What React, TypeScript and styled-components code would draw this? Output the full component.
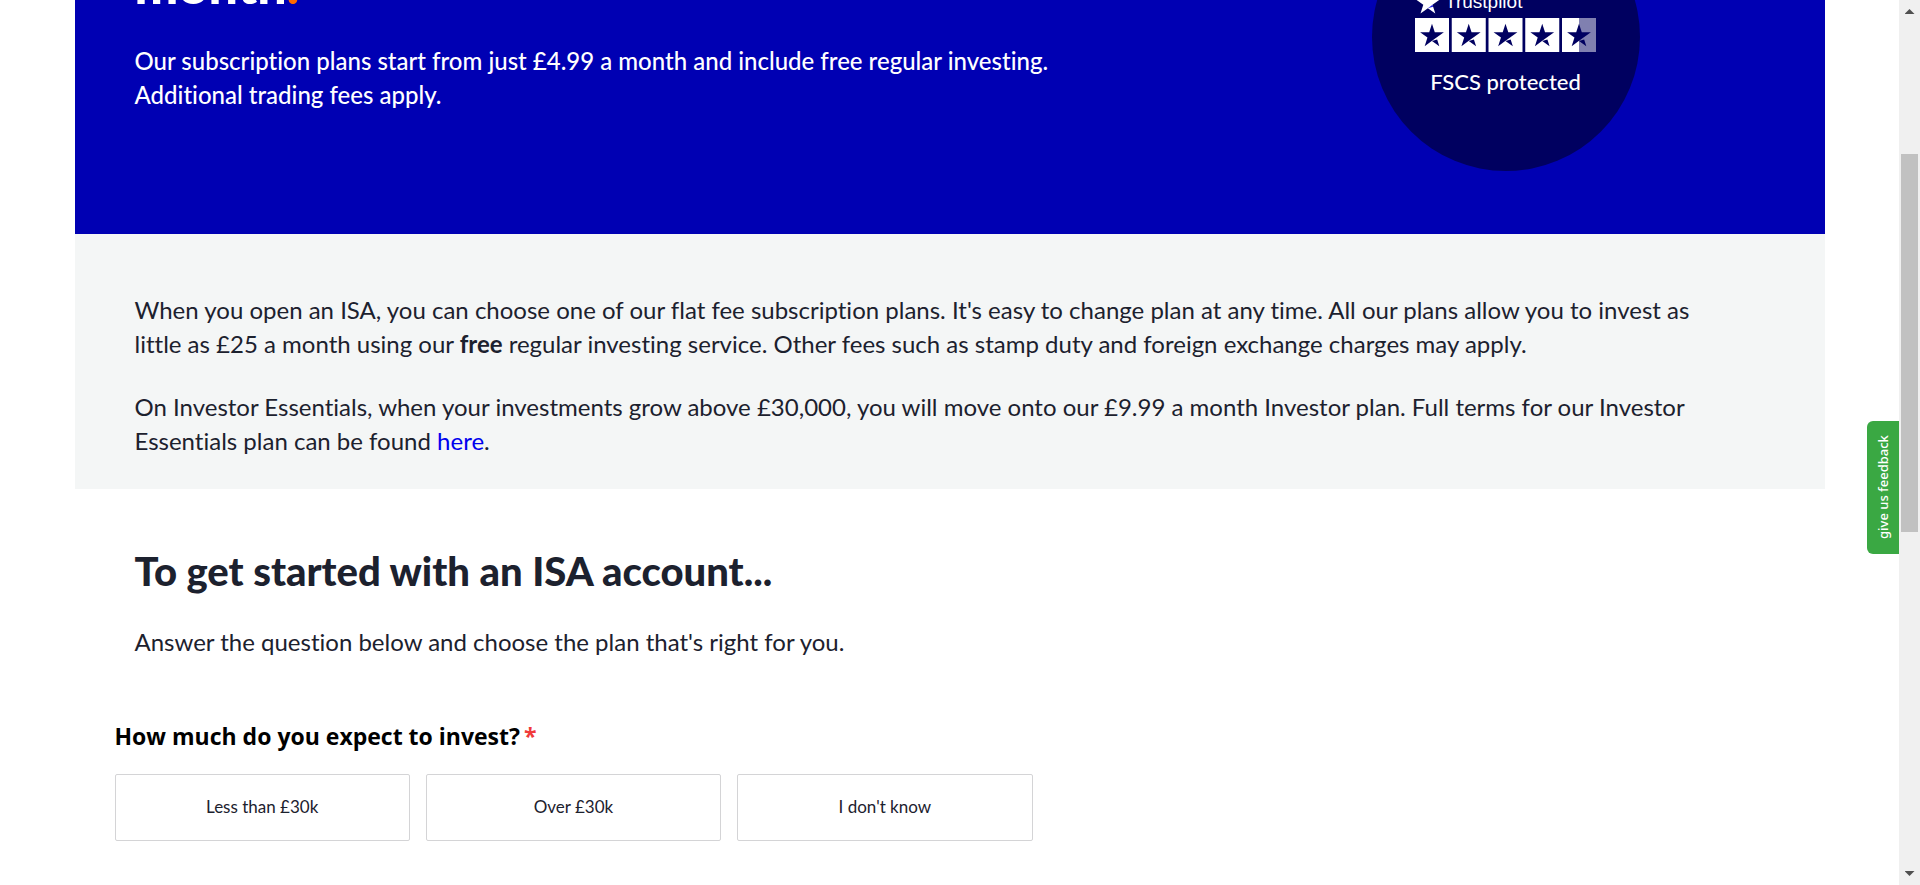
import React, { useState } from "react";
import styled, { createGlobalStyle, css } from "styled-components";

const colors = {
  blue: "#0000b3",
  navy: "#000060",
  ink: "#1c212e",
  mist: "#f4f6f6",
  orange: "#ff6a00",
  green: "#3aa843",
  line: "#d4d4d6",
};

const GlobalStyle = createGlobalStyle`
  *, *::before, *::after { box-sizing: border-box; }
  body {
    margin: 0;
    background: #fff;
    color: ${colors.ink};
    font-family: Lato, "Liberation Sans", sans-serif;
    font-variant-ligatures: none;
  }
  h1, h2, h3, p { margin: 0; }
`;

const Shell = styled.div`
  display: flex;
  height: 100vh;
  overflow: hidden;
`;

const Main = styled.main`
  flex: 1;
  min-width: 0;
`;

const Column = styled.div`
  max-width: 1750px;
  margin: 0 auto;
`;

const Hero = styled.section`
  display: flex;
  justify-content: space-between;
  align-items: flex-end;
  height: 234px;
  padding: 0 185px 0 60px;
  overflow: hidden;
  background: ${colors.blue};
  color: #fff;
`;

const HeroCopy = styled.div`
  display: flex;
  flex-direction: column;
  gap: 32px;
  padding-bottom: 122px;
`;

const HeroTitle = styled.h1`
  font-size: 52px;
  line-height: 56px;
  font-weight: 900;
`;

const Accent = styled.span`
  color: ${colors.orange};
`;

const Text = styled.p<{ $medium?: boolean }>`
  font-size: 24px;
  line-height: 34px;
  font-weight: ${(p) => (p.$medium ? 500 : 400)};
`;

const Badge = styled.div`
  display: flex;
  flex: none;
  flex-direction: column;
  align-items: center;
  justify-content: flex-end;
  width: 268px;
  height: 268px;
  margin-bottom: 63px;
  padding-bottom: 75px;
  border-radius: 50%;
  background: ${colors.navy};
`;

const Rating = styled.div`
  display: flex;
  flex-direction: column;
  gap: 4px;
  margin-bottom: 16px;
`;

const Brand = styled.div`
  display: flex;
  align-items: center;
  gap: 4px;
  height: 24px;
  font-family: "Liberation Sans", sans-serif;
  font-size: 19px;
  line-height: 24px;

  svg {
    flex: none;
  }
`;

const BadgeText = styled.p`
  font-size: 22px;
  line-height: 28px;
  font-weight: 500;
`;

const Notes = styled.section`
  display: flex;
  flex-direction: column;
  gap: 29px;
  padding: 59px 60px 31px;
  background: ${colors.mist};
`;

const TextLink = styled.a`
  color: #0000ee;
  text-decoration: none;
`;

const Intro = styled.section`
  display: flex;
  flex-direction: column;
  gap: 30px;
  padding: 58px 60px 0;
`;

const Title = styled.h2`
  font-size: 40px;
  line-height: 48px;
  font-weight: 900;
`;

const Question = styled.section`
  padding: 61px 40px 44px;
`;

const QuestionTitle = styled.h3`
  margin-bottom: 22px;
  color: #000;
  font-family: "Open Sans", sans-serif;
  font-size: 23px;
  line-height: 32px;
  font-weight: 700;
`;

const Required = styled.span`
  margin-left: 4px;
  color: #f03a3a;
`;

const Options = styled.div`
  display: grid;
  grid-template-columns: repeat(3, 1fr);
  gap: 16px;
  max-width: 918px;
`;

const Option = styled.button<{ $selected: boolean }>`
  height: 67px;
  padding: 0 8px 2px;
  border: 1px solid ${(p) => (p.$selected ? colors.blue : colors.line)};
  border-radius: 2px;
  background: #fff;
  color: ${colors.ink};
  font-family: inherit;
  font-size: 17px;
  line-height: 24px;
  cursor: pointer;
`;

const FeedbackTab = styled.button`
  position: absolute;
  top: 421px;
  right: 21px;
  width: 32px;
  height: 133px;
  padding: 0;
  border: 0;
  border-radius: 0 6px 6px 0;
  background: ${colors.green};
  color: #fff;
  font-family: "Noto Sans", sans-serif;
  font-size: 13px;
  line-height: 32px;
  font-weight: 500;
  writing-mode: vertical-rl;
  transform: rotate(180deg);
  cursor: pointer;
`;

const ScrollBar = styled.div`
  display: flex;
  flex: none;
  flex-direction: column;
  justify-content: space-between;
  width: 21px;
  background: #f0f0f0;
`;

const Track = styled.div`
  flex: 1;
  padding: 131px 2px 0;
`;

const Thumb = styled.div`
  height: 378px;
  background: #c1c1c1;
`;

const Arrow = styled.span<{ $down?: boolean }>`
  width: 10px;
  height: 5px;
  margin: 9px auto;
  background: #505050;
  ${(p) =>
    p.$down
      ? css`
          clip-path: polygon(0 0, 100% 0, 50% 100%);
        `
      : css`
          clip-path: polygon(50% 0, 100% 100%, 0 100%);
        `}
`;

const STAR_BODY =
  "M81.6 40.4H55.9L48 16.2l-7.9 24.2H14.4l20.8 15-7.9 24.2 20.8-15 12.8-9.2zM48 64.7L62.6 61l6.1 18.8z";

function BrandStar() {
  return (
    <svg width="26" height="24" viewBox="12 14 72.6 67" aria-hidden="true">
      <path
        d="M81.6 40.4H55.9L48 16.2l-7.9 24.2H14.4l20.8 15-7.9 24.2L48 64.7l20.7 15.1-7.9-24.4z"
        fill="#fff"
      />
      <path d="M60.9 55.4L62.6 61 48 64.7z" fill="#2020e0" />
    </svg>
  );
}

function RatingStars() {
  return (
    <svg width="181" height="34" viewBox="0 0 181 34" role="img" aria-label="4.5 out of 5 stars">
      {[0, 1, 2, 3, 4].map((i) => (
        <g key={i} transform={`translate(${i * 36.75} 0)`}>
          <rect width={i === 4 ? 17 : 34} height="34" fill="#fff" />
          {i === 4 && <rect x="17" width="17" height="34" fill="#8080b0" />}
          <path d={STAR_BODY} transform="scale(0.354)" fill={colors.navy} />
        </g>
      ))}
    </svg>
  );
}

const amounts = ["Less than £30k", "Over £30k", "I don't know"];

export default function App() {
  const [selected, setSelected] = useState<string | null>(null);

  return (
    <Shell>
      <GlobalStyle />
      <Main>
        <Column>
          <Hero>
            <HeroCopy>
              <HeroTitle>
                month<Accent>.</Accent>
              </HeroTitle>
              <Text $medium>
                Our subscription plans start from just £4.99 a month and include free regular investing.
                <br />
                Additional trading fees apply.
              </Text>
            </HeroCopy>
            <Badge>
              <Rating>
                <Brand>
                  <BrandStar />
                  Trustpilot
                </Brand>
                <RatingStars />
              </Rating>
              <BadgeText>FSCS protected</BadgeText>
            </Badge>
          </Hero>

          <Notes>
            <Text>
              When you open an ISA, you can choose one of our flat fee subscription plans. It's easy to
              change plan at any time. All our plans allow you to invest as
              <br />
              little as £25 a month using our <b>free</b> regular investing service. Other fees such as
              stamp duty and foreign exchange charges may apply.
            </Text>
            <Text>
              On Investor Essentials, when your investments grow above £30,000, you will move onto our
              £9.99 a month Investor plan. Full terms for our Investor
              <br />
              Essentials plan can be found <TextLink href="#terms">here</TextLink>.
            </Text>
          </Notes>

          <Intro>
            <Title>To get started with an ISA account...</Title>
            <Text>Answer the question below and choose the plan that's right for you.</Text>
          </Intro>

          <Question>
            <QuestionTitle id="invest-question">
              How much do you expect to invest?<Required>*</Required>
            </QuestionTitle>
            <Options role="group" aria-labelledby="invest-question">
              {amounts.map((amount) => (
                <Option
                  key={amount}
                  type="button"
                  $selected={selected === amount}
                  aria-pressed={selected === amount}
                  onClick={() => setSelected(amount)}
                >
                  {amount}
                </Option>
              ))}
            </Options>
          </Question>
        </Column>
      </Main>
      <FeedbackTab type="button">give us feedback</FeedbackTab>
      <ScrollBar aria-hidden="true">
        <Arrow />
        <Track>
          <Thumb />
        </Track>
        <Arrow $down />
      </ScrollBar>
    </Shell>
  );
}
